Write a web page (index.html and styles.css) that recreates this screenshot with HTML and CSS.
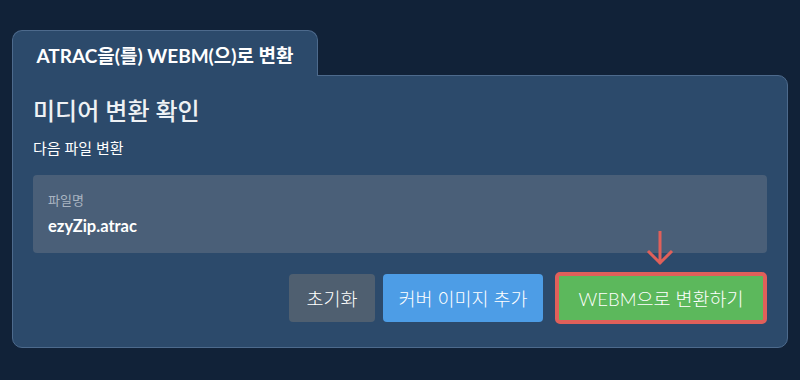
FILE: index.html
```html
<!DOCTYPE html>
<html lang="ko">
<head>
    <meta charset="UTF-8">
    <meta name="viewport" content="width=device-width, initial-scale=1.0">
    <title>ATRAC to WEBM</title>
    <link rel="stylesheet" href="styles.css">
</head>
<body>
    <div class="converter">
        <!-- 탭 -->
        <div class="tab">ATRAC을(를) WEBM(으)로 변환</div>

        <!-- 변환 확인 패널 -->
        <div class="panel">
            <h1 class="title">미디어 변환 확인</h1>
            <p class="subtitle">다음 파일 변환</p>
            <div class="file-box">
                <div class="file-label">파일명</div>
                <div class="file-name">ezyZip.atrac</div>
            </div>
            <div class="actions">
                <button class="btn btn-reset">초기화</button>
                <button class="btn btn-cover">커버 이미지 추가</button>
                <div class="convert-wrap">
                    <svg class="arrow" width="30" height="36" viewBox="0 0 30 36">
                        <path d="M15 1 V34 M3 21 L15 33 L27 21" fill="none" stroke="#e0605a" stroke-width="3"/>
                    </svg>
                    <button class="btn btn-convert">WEBM으로 변환하기</button>
                </div>
            </div>
        </div>
    </div>
</body>
</html>
```

FILE: styles.css
```css
body {
    margin: 0;
    padding: 30px 12px 0 12px;
    background-color: #112238;
    font-family: Lato, "Noto Sans CJK KR", sans-serif;
    color: #ffffff;
}
.converter {
    width: 776px;
}
.tab {
    display: inline-block;
    box-sizing: border-box;
    width: 306px;
    height: 46px;
    padding-top: 10px;
    text-align: center;
    font-size: 19px;
    font-weight: bold;
    background-color: #2c4a6b;
    border: 1px solid #4d6a8c;
    border-bottom: none;
    border-radius: 10px 10px 0 0;
    position: relative;
    z-index: 1;
}
.panel {
    box-sizing: border-box;
    height: 273px;
    margin-top: -1px;
    padding: 19px 20px 0 20px;
    background-color: #2c4a6b;
    border: 1px solid #4d6a8c;
    border-radius: 0 10px 10px 10px;
}
.title {
    margin: 0;
    font-size: 24px;
    font-weight: 500;
    color: #eef1f4;
    line-height: 32px;
}
.subtitle {
    margin: 11px 0 0 0;
    font-size: 15px;
    line-height: 20px;
    color: #ffffff;
}
.file-box {
    box-sizing: border-box;
    height: 78px;
    margin-top: 17px;
    padding: 16px 15px 0 15px;
    background-color: #4a5f78;
    border-radius: 4px;
}
.file-label {
    font-size: 13px;
    color: #a9b4c1;
    line-height: 18px;
}
.file-name {
    margin-top: 7px;
    font-size: 16.5px;
    font-weight: bold;
    line-height: 20px;
}
.actions {
    display: flex;
    justify-content: flex-end;
    align-items: flex-end;
    gap: 8px;
    margin-top: 19px;
}
.btn {
    box-sizing: border-box;
    height: 48px;
    padding: 0 12px;
    border: none;
    border-radius: 4px;
    font-family: Lato, "Noto Sans CJK KR", sans-serif;
    font-size: 18.5px;
    font-weight: 300;
    color: #ffffff;
    cursor: pointer;
}
.btn-reset {
    width: 86px;
    background-color: #4f5f70;
}
.btn-cover {
    width: 160px;
    background-color: #4d9de6;
}
.convert-wrap {
    position: relative;
    margin-left: 4px;
}
.arrow {
    position: absolute;
    left: 90px;
    top: -42px;
}
.btn-convert {
    display: block;
    width: 212px;
    height: 52px;
    margin-bottom: -2px;
    background-color: #5cb85c;
    border: 4px solid #e0605a;
    border-radius: 5px;
}
```
